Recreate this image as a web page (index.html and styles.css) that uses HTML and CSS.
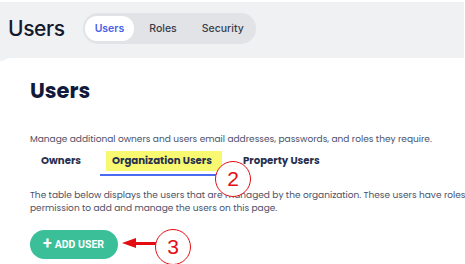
FILE: index.html
```html
<!doctype html>
<html lang="en">
  <head>
    <meta charset="UTF-8" />
    <meta name="viewport" content="width=device-width, initial-scale=1.0" />
    <title>Users</title>
    <link rel="stylesheet" href="styles.css">
  </head>
  <body>
    <header class="topbar">
      <h1 class="page-title">Users</h1>
      <nav class="segments">
        <span class="segment active">Users</span>
        <span class="segment">Roles</span>
        <span class="segment">Security</span>
      </nav>
    </header>
    <main class="card">
      <h2 class="card-title">Users</h2>
      <p class="lead">Manage additional owners and users email addresses, passwords, and roles they require.</p>
      <div class="tabs">
        <span class="tab">Owners</span>
        <span class="tab active"><span class="mark">Organization Users</span></span>
        <span class="tab">Property Users</span>
        <span class="callout callout-2">2</span>
      </div>
      <p class="info">The table below displays the users that are managed by the organization. These users have roles with permission to add and manage the users on this page.</p>
      <div class="actions">
        <button class="add-btn"><span class="plus">+</span>ADD USER</button>
        <span class="arrow"></span>
        <span class="callout callout-3">3</span>
      </div>
    </main>
  </body>
</html>
```

FILE: styles.css
```css
* {
  margin: 0;
  padding: 0;
  box-sizing: border-box;
}
body {
  background-color: #fff;
  font-family: "Poppins", "Lato", "Open Sans", sans-serif;
  color: #2b3350;
  width: 465px;
  height: 264px;
  overflow: hidden;
}
.topbar {
  display: flex;
  align-items: center;
  gap: 18px;
  height: 59px;
  margin: 2px 1px 0 0;
  padding: 0 0 6px 8px;
  background-color: #f0f1f3;
  font-family: "Inter", sans-serif;
}
.page-title {
  font-size: 21px;
  font-weight: 500;
  color: #141a2e;
  letter-spacing: -0.4px;
}
.segments {
  display: flex;
  align-items: center;
  gap: 5px;
  padding: 3px 2px;
  border-radius: 15px;
  background-color: #e1e3e7;
}
.segment {
  padding: 6px 10px;
  border-radius: 12px;
  font-size: 10.5px;
  font-weight: 500;
  color: #3a3d48;
}
.segment.active {
  background-color: #fff;
  color: #4a5ee8;
  font-weight: 600;
}
.card {
  position: relative;
  margin-top: -3px;
  padding: 17px 0 0 30px;
  border-radius: 10px 0 0 0;
  background-color: #fff;
}
.card-title {
  font-size: 21px;
  font-weight: 700;
  color: #111a3a;
}
.lead {
  margin-top: 26px;
  font-size: 9px;
  line-height: 14px;
  color: #4a5068;
  white-space: nowrap;
}
.tabs {
  position: relative;
  display: flex;
  align-items: flex-start;
  margin-top: 2px;
}
.tab {
  position: relative;
  z-index: 1;
  padding: 5px 11px 5px;
  font-size: 10.2px;
  font-weight: 700;
  color: #27304f;
}
.tab.active {
  z-index: 0;
  margin-left: 8px;
  padding-left: 6px;
  padding-right: 0;
  border-bottom: 2px solid #4a6cf2;
}
.tab.active + .tab {
  margin-left: 10px;
}
.mark {
  display: inline-block;
  padding: 2px 10px 2px 6px;
  margin: -2px 0;
  background-color: #f9f871;
}
.info {
  margin-top: 13px;
  width: 460px;
  font-size: 9px;
  line-height: 13px;
  color: #4a5068;
}
.actions {
  position: relative;
  margin-top: 15px;
}
.add-btn {
  display: inline-flex;
  align-items: center;
  gap: 3px;
  height: 29px;
  width: 88px;
  padding: 0 0 0 13px;
  border: 0;
  border-radius: 15px;
  background-color: #3bbf99;
  color: #fff;
  font-family: "Roboto", sans-serif;
  font-size: 10.5px;
  font-weight: 700;
}
.plus {
  font-size: 16px;
  line-height: 1;
  margin-top: -2px;
}
.callout {
  position: absolute;
  display: flex;
  align-items: center;
  justify-content: center;
  width: 36px;
  height: 36px;
  border: 1.6px solid #e30d12;
  border-radius: 50%;
  background-color: #fff;
  color: #e30d12;
  font-family: "Liberation Sans", sans-serif;
  font-size: 21px;
}
.callout-2 {
  left: 185px;
  top: 13px;
}
.callout-3 {
  left: 125px;
  top: -1px;
}
.arrow {
  position: absolute;
  left: 102px;
  top: 12px;
  width: 24px;
  height: 2.5px;
  background-color: #e30d12;
}
.arrow::before {
  content: "";
  position: absolute;
  left: -10px;
  top: -4px;
  border-right: 14px solid #e30d12;
  border-top: 5px solid transparent;
  border-bottom: 5px solid transparent;
}
```
